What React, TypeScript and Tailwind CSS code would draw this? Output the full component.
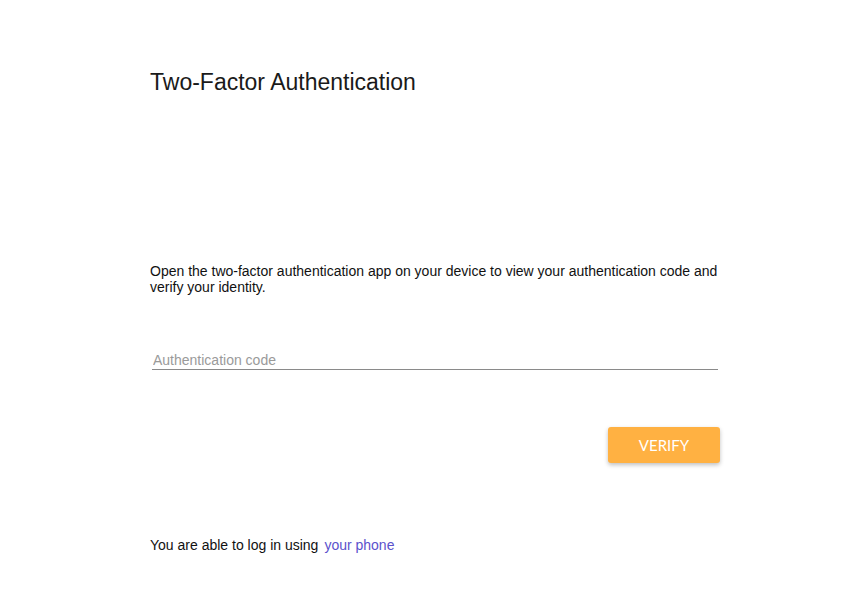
export default function App() {
  return (
    <div className="min-h-[597px] w-full bg-white" style={{ fontFamily: '"Liberation Sans", Arial, sans-serif' }}>
      <div className="ml-[150px] w-[570px] pt-[69px] text-[#222]">
        <h1 className="text-[23px] leading-[26px] font-normal text-[#1a1a1a]">Two-Factor Authentication</h1>
        <p className="mt-[168px] text-[14px] leading-[16px] text-[#111]">
          Open the two-factor authentication app on your device to view your authentication code and verify your identity.
        </p>
        <div className="mt-[57px] px-[2px]">
          <input
            className="block w-full border-b border-[#8a8a8a] bg-transparent pb-[1px] pl-[1px] text-[14px] leading-[16px] text-[#222] outline-none placeholder:text-[#9a9a9a]"
            placeholder="Authentication code"
          />
        </div>
        <div className="mt-[57px] flex justify-end">
          <button
            className="h-[36px] w-[112px] rounded-[3px] bg-[#ffb142] text-[15px] text-white shadow-[0_2px_4px_rgba(0,0,0,0.25)]"
            style={{ fontFamily: 'Lato, "Liberation Sans", sans-serif' }}
          >
            VERIFY
          </button>
        </div>
        <div className="mt-[74px] flex text-[14px] leading-[16px] text-[#111]">
          <span>You are able to log in using</span>
          <a className="ml-[6px] text-[#5b52cc]" href="#">your phone</a>
        </div>
      </div>
    </div>
  );
}
